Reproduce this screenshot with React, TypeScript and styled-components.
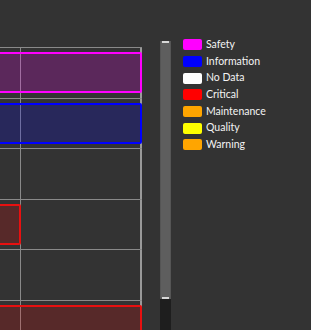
import React from "react";
import styled, { createGlobalStyle } from "styled-components";

const GlobalStyle = createGlobalStyle`
  html, body {
    margin: 0;
    padding: 0;
    background: #333333;
    overflow: hidden;
  }
`;

const Page = styled.div`
  display: flex;
  width: 311px;
  height: 330px;
  background: #333333;
  font-family: Lato, "Noto Sans", sans-serif;
  overflow: hidden;
`;

const Chart = styled.div`
  width: 142px;
  margin-top: 47px;
  flex-shrink: 0;
  background-image: linear-gradient(#8a8a8a, #8a8a8a),
    linear-gradient(#9a9a9a, #9a9a9a);
  background-size: 1px 100%, 2px 100%;
  background-position: 20px 0, 140px 0;
  background-repeat: no-repeat;
`;

const Row = styled.div`
  height: 50.5px;
  box-sizing: border-box;
  border-top: 1px solid #8a8a8a;
  padding: 4px 0 0;
`;

type Tone = { stroke: string; fill: string };

const tones: Record<string, Tone> = {
  safety: { stroke: "#ff00ff", fill: "rgba(255, 0, 255, 0.2)" },
  info: { stroke: "#0000ff", fill: "rgba(0, 0, 255, 0.2)" },
  critical: { stroke: "#e81010", fill: "rgba(255, 0, 0, 0.18)" },
};

const Bar = styled.div<{ $tone: Tone; $width: number }>`
  width: ${(p) => p.$width}px;
  height: 41px;
  box-sizing: border-box;
  margin-left: -4px;
  border: 2px solid ${(p) => p.$tone.stroke};
  border-radius: 2px;
  background: ${(p) => p.$tone.fill};
`;

const Scroll = styled.div`
  margin: 41px 0 0 18px;
  width: 11px;
  display: flex;
  flex-direction: column;
  flex-shrink: 0;
`;

const Thumb = styled.div`
  height: 258px;
  background: #5e5e5e;
  border-left: 1px solid #555;
  border-right: 1px solid #555;
  box-sizing: border-box;
  display: flex;
  flex-direction: column;
  justify-content: space-between;
  align-items: center;
`;

const Cap = styled.div`
  width: 7px;
  height: 2px;
  background: #d8d8d8;
`;

const Track = styled.div`
  flex: 1;
  background: #1e1e1e;
`;

const Legend = styled.div`
  margin: 39px 0 0 12px;
  display: flex;
  flex-direction: column;
`;

const Item = styled.div`
  display: flex;
  align-items: center;
  height: 16.67px;
  gap: 4px;
`;

const Swatch = styled.div<{ $color: string }>`
  width: 19px;
  height: 11px;
  border-radius: 2px;
  background: ${(p) => p.$color};
  margin-top: -5px;
`;

const Label = styled.span`
  color: #f4f4f4;
  font-size: 10.5px;
  font-weight: 400;
  line-height: 1;
  margin-top: -6px;
`;

const legend = [
  { label: "Safety", color: "#ff00ff" },
  { label: "Information", color: "#0000ff" },
  { label: "No Data", color: "#ffffff" },
  { label: "Critical", color: "#ff0000" },
  { label: "Maintenance", color: "#ffa500" },
  { label: "Quality", color: "#ffff00" },
  { label: "Warning", color: "#ffa500" },
];

const App = () => (
  <>
    <GlobalStyle />
    <Page>
      <Chart>
        <Row>
          <Bar $tone={tones.safety} $width={146} />
        </Row>
        <Row>
          <Bar $tone={tones.info} $width={146} />
        </Row>
        <Row />
        <Row>
          <Bar $tone={tones.critical} $width={25} />
        </Row>
        <Row />
        <Row>
          <Bar $tone={tones.critical} $width={146} />
        </Row>
      </Chart>
      <Scroll>
        <Thumb>
          <Cap />
          <Cap />
        </Thumb>
        <Track />
      </Scroll>
      <Legend>
        {legend.map((l) => (
          <Item key={l.label}>
            <Swatch $color={l.color} />
            <Label>{l.label}</Label>
          </Item>
        ))}
      </Legend>
    </Page>
  </>
);

export default App;
